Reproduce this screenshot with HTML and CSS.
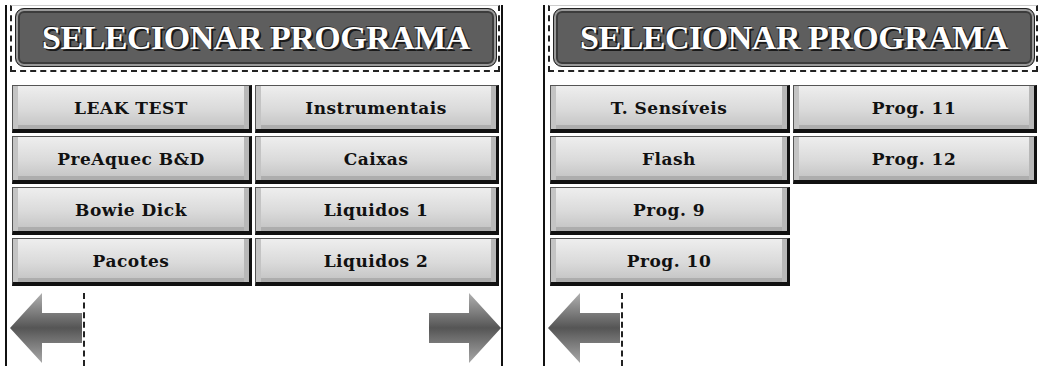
FILE: index.html
```html
<!DOCTYPE html>
<html lang="pt">
<head>
    <meta charset="UTF-8">
    <meta name="viewport" content="width=device-width, initial-scale=1.0">
    <title>Selecionar Programa</title>
    <link rel="stylesheet" href="styles.css">
</head>
<body>
    <div class="screens">

        <!-- Page 1 -->
        <section class="screen">
            <header class="title-frame">
                <div class="title-bar">SELECIONAR PROGRAMA</div>
            </header>
            <div class="programs">
                <button class="prog">LEAK TEST</button>
                <button class="prog">Instrumentais</button>
                <button class="prog">PreAquec B&amp;D</button>
                <button class="prog">Caixas</button>
                <button class="prog">Bowie Dick</button>
                <button class="prog">Liquidos 1</button>
                <button class="prog">Pacotes</button>
                <button class="prog">Liquidos 2</button>
            </div>
            <div class="nav">
                <div class="nav-btn prev">
                    <svg width="72" height="70" viewBox="0 0 72 70">
                        <defs>
                            <linearGradient id="shadeA" x1="0" y1="0" x2="0" y2="1">
                                <stop offset="0" stop-color="#b0b0b0"/>
                                <stop offset="0.5" stop-color="#555"/>
                                <stop offset="1" stop-color="#a8a8a8"/>
                            </linearGradient>
                        </defs>
                        <polygon points="0,35 32,0 32,20 72,20 72,50 32,50 32,70" fill="url(#shadeA)"/>
                    </svg>
                </div>
                <div class="nav-btn next">
                    <svg width="72" height="70" viewBox="0 0 72 70">
                        <polygon points="72,35 40,0 40,20 0,20 0,50 40,50 40,70" fill="url(#shadeA)"/>
                    </svg>
                </div>
            </div>
        </section>

        <!-- Page 2 -->
        <section class="screen">
            <header class="title-frame">
                <div class="title-bar">SELECIONAR PROGRAMA</div>
            </header>
            <div class="programs">
                <button class="prog">T. Sensíveis</button>
                <button class="prog">Prog. 11</button>
                <button class="prog">Flash</button>
                <button class="prog">Prog. 12</button>
                <button class="prog first-col">Prog. 9</button>
                <button class="prog first-col">Prog. 10</button>
            </div>
            <div class="nav">
                <div class="nav-btn prev">
                    <svg width="72" height="70" viewBox="0 0 72 70">
                        <polygon points="0,35 32,0 32,20 72,20 72,50 32,50 32,70" fill="url(#shadeA)"/>
                    </svg>
                </div>
            </div>
        </section>

    </div>
</body>
</html>
```

FILE: styles.css
```css
body {
    margin: 0;
    background: #fff;
    font-family: "DejaVu Serif", "Liberation Serif", serif;
}

.screens {
    display: flex;
    gap: 40px;
    padding: 5px 0 0 5px;
    height: 361px;
    overflow: hidden;
}

/* one panel of the touch screen */
.screen {
    flex-shrink: 0;
    width: 494px;
    border-left: 2px solid #111;
    border-right: 2px solid #111;
}

.title-frame {
    margin: 0 1px 0 3px;
    padding: 2px 1px 3px 3px;
    border: 2px dashed #222;
    border-top: 1px solid #ccc;
}

.title-bar {
    height: 57px;
    border: 1px solid #222;
    border-radius: 9px;
    background: #5e5e5e;
    box-shadow: inset 0 0 0 2px #999, inset 0 0 0 4px #3c3c3c;
    display: flex;
    align-items: center;
    justify-content: center;
    color: #fff;
    font-family: "Liberation Serif", serif;
    font-weight: bold;
    font-size: 34px;
    letter-spacing: -0.5px;
    text-shadow: 2px 2px 0 #1a1a1a, -1px -1px 0 #2a2a2a;
}

/* program buttons */
.programs {
    display: grid;
    grid-template-columns: 240px 244px;
    grid-auto-rows: 48px;
    gap: 3px;
    margin-top: 13px;
    padding-left: 5px;
}

.prog {
    display: flex;
    align-items: center;
    justify-content: center;
    padding: 0;
    background: linear-gradient(#eeeeee, #dadada 55%, #c2c2c2);
    border-top: 1px solid #555;
    border-left: 1px solid #555;
    border-right: 3px solid #111;
    border-bottom: 4px solid #111;
    box-shadow: inset 5px 0 0 #c4c4c4, inset -5px 0 0 #b8b8b8, inset 0 -4px 0 #adadad;
    color: #111;
    font-family: "DejaVu Serif", serif;
    font-weight: bold;
    font-size: 17px;
    letter-spacing: 0.5px;
}

.first-col {
    grid-column: 1;
}

/* page arrows */
.nav {
    display: flex;
    justify-content: space-between;
    margin-top: 7px;
}

.nav-btn {
    height: 73px;
}

.nav-btn svg {
    display: block;
}

.prev {
    margin-left: 3px;
    padding-right: 1px;
    border-right: 2px dashed #222;
}
```
